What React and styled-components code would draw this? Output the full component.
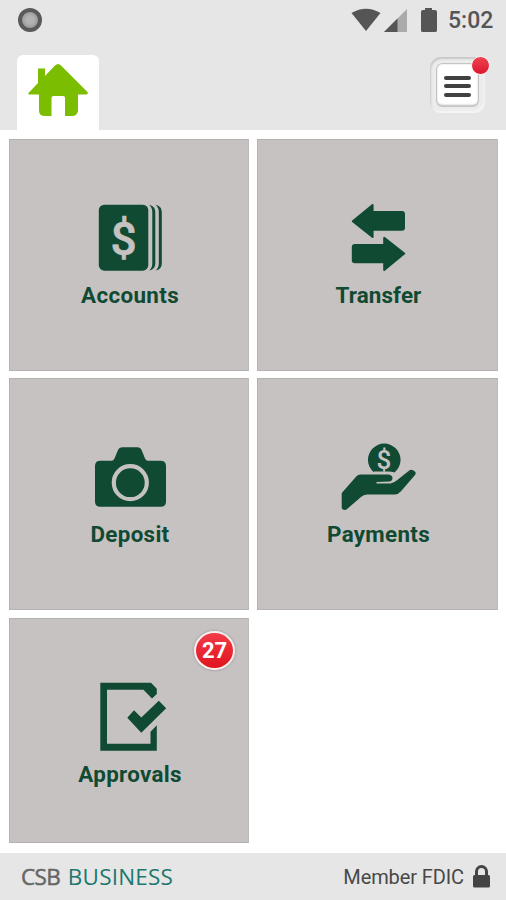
import React from 'react';
import styled, { createGlobalStyle } from 'styled-components';

const GREEN = '#104a33';
const TILE = '#c6c2c1';

const GlobalStyle = createGlobalStyle`
    * {
        box-sizing: border-box;
    }
    body {
        margin: 0;
        background: #fff;
        font-family: Roboto, "Liberation Sans", sans-serif;
    }
`;

const Screen = styled.div`
    display: flex;
    flex-direction: column;
    height: 900px;
    overflow: hidden;
`;

const Header = styled.header`
    height: 130px;
    background: #e6e6e6;
`;

const StatusBar = styled.div`
    display: flex;
    align-items: center;
    height: 40px;
    padding: 0 13px 0 18px;
`;

const Record = styled.div`
    width: 24px;
    height: 24px;
    margin-right: auto;
    border: 4px solid #5a5a5a;
    border-radius: 50%;
    background: radial-gradient(#b4b4b4 30%, #989898 75%);
`;

const StatusIcons = styled.svg`
    display: block;
    width: 90px;
    height: 30px;
`;

const Clock = styled.span`
    width: 45px;
    margin-left: 8px;
    padding-top: 2px;
    color: #555;
    font-size: 23px;
    font-weight: 500;
    line-height: 28px;
    white-space: nowrap;
`;

const Nav = styled.nav`
    display: flex;
    justify-content: space-between;
    height: 90px;
    padding: 15px 21px 0 17px;
`;

const HomeTab = styled.div`
    width: 82px;
    height: 75px;
    border-radius: 6px 6px 0 0;
    background: #fff;

    svg {
        display: block;
    }
`;

const MenuButton = styled.div`
    position: relative;
    display: flex;
    flex-direction: column;
    align-items: center;
    justify-content: center;
    gap: 4.5px;
    width: 55px;
    height: 56px;
    margin-top: 2px;
    padding-top: 2px;
    border: 6px solid #ececec;
    border-radius: 12px;
    background: #fff;
    box-shadow: inset 0 0 0 1px #c4c4c4, inset 0 0 2px 1px #d0d0d0, inset 0 -2px 2px #bbb;

    &::before {
        content: '';
        position: absolute;
        inset: -6px;
        border-radius: 11px;
        box-shadow: inset 1px 2px 2px #c8c8c8, inset -1px -2px 2px #f6f6f6;
    }
`;

const MenuLine = styled.span`
    width: 27px;
    height: 4px;
    border-radius: 2px;
    background: #414141;
`;

const Dot = styled.span`
    position: absolute;
    top: -7px;
    right: -11px;
    width: 19px;
    height: 19px;
    border: 1.5px solid #f7f1f1;
    border-radius: 50%;
    background: linear-gradient(#f04350, #dc1830);
`;

const Grid = styled.main`
    display: grid;
    grid-template-columns: 240px 241px;
    grid-template-rows: 231.5px 231.5px 225.5px;
    gap: 7.8px 8px;
    flex: 1;
    align-content: start;
    padding: 9px 8px 0 9px;
`;

const TileBox = styled.div`
    position: relative;
    display: flex;
    flex-direction: column;
    align-items: center;
    padding-top: 60px;
    border: 1px solid #b4b1af;
    border-right-color: #bebbb9;
    background: ${TILE};
`;

const Glyph = styled.svg`
    display: block;
    width: 80px;
    height: 80px;
    fill: ${GREEN};
`;

const Label = styled.span`
    margin-top: 2px;
    padding-left: 2px;
    color: ${GREEN};
    font-size: 22.4px;
    font-weight: 700;
    line-height: 26px;
    letter-spacing: ${props => props.$spacing}px;
`;

const Badge = styled.span`
    position: absolute;
    top: 12px;
    right: 13px;
    width: 41px;
    height: 39px;
    border: 2px solid #f8eeee;
    border-radius: 50%;
    background: linear-gradient(#f23c48, #e0141e);
    box-shadow: 0 0 2px 1px #aaa;
    color: #fff;
    font-size: 22px;
    font-weight: 700;
    line-height: 36px;
    text-align: center;
`;

const Footer = styled.footer`
    display: flex;
    align-items: center;
    justify-content: space-between;
    height: 47px;
    padding: 0 15px 0 21px;
    background: #e6e6e6;
`;

const Brand = styled.div`
    color: #1d786e;
    font-family: "Open Sans", "Noto Sans", sans-serif;
    font-size: 22.5px;
    line-height: 28px;
    letter-spacing: 0.2px;
    word-spacing: 1.5px;

    b {
        color: #666;
        font-weight: 500;
        letter-spacing: -0.6px;
        -webkit-text-stroke: 0.5px #666;
    }
`;

const Member = styled.div`
    display: flex;
    align-items: center;
    gap: 8px;
    color: #484848;
    font-size: 20px;
    letter-spacing: -0.1px;
`;

const HomeIcon = () => (
    <svg width="82" height="75" viewBox="0 0 82 75" fill="#7bbd00">
        <path d="M11.5 38 21 28V13.5h7v7.5L38 10.5Q41 7.5 44 10.5L70.5 37Q71.5 39.5 69 39.5H61V56Q60 61 55 61H48V42.5Q48 41 46 41H36.5Q34.5 41 34.5 43V61H28Q22 61 22 55.5V39.5H13Q10.5 39.5 11.5 38Z" />
    </svg>
);

const AccountsIcon = () => (
    <Glyph viewBox="0 0 80 80">
        <rect x="9.8" y="4.7" width="49.5" height="66" rx="5.5" />
        <path d="M60 4.8Q66.3 6 66.3 12V63.5Q66.3 69.500 60 70.500Q63.300 68 63.300 63.500V12Q63.300 7.500 60 4.800Z" />
        <path d="M66.500 4.800Q72.800 6 72.800 12V63.500Q72.800 69.500 66.500 70.500Q69.800 68 69.800 63.500V12Q69.800 7.500 66.500 4.800Z" />
        <text x="34.5" y="54.5" fill={TILE} stroke={TILE} strokeWidth="0.6" fontFamily="Roboto" fontSize="46" fontWeight="500" textAnchor="middle">$</text>
    </Glyph>
);

const TransferIcon = () => (
    <Glyph viewBox="0 0 80 80" stroke={GREEN} strokeWidth="2" strokeLinejoin="round">
        <path d="M14.8 21.3 34.6 5V12H64Q66 12 66 14V27.7Q66 29.7 64 29.7H34.6V37Z" />
        <path d="M66.2 53.6 46.2 37.8V45H17Q14.8 45 14.8 47V60.5Q14.8 62.3 17 62.3H46.2V70Z" />
    </Glyph>
);

const DepositIcon = () => (
    <Glyph viewBox="0 0 80 80">
        <path d="M11.5 21.7H22.5Q24.5 21.7 25.5 19.5L28.8 11.5Q30.2 8.2 33.5 8.2H48.3Q51.5 8.2 52.8 11.5L56 19.5Q57 21.7 59 21.7H71.5Q77 21.7 77 27V62.5Q77 67.8 71.5 67.8H11.5Q6 67.8 6 62.5V27Q6 21.7 11.5 21.7Z" />
        <circle cx="41.3" cy="43.7" r="16.5" fill="none" stroke={TILE} strokeWidth="4.2" />
    </Glyph>
);

const PaymentsIcon = () => (
    <Glyph viewBox="0 0 80 80">
        <path d="M36 33.5A16.3 16.3 0 1 1 56.5 33.5Q54 32.5 50 32.5H36Z" />
        <text x="45.8" y="29.5" fill={TILE} fontFamily="Roboto" fontSize="26" fontWeight="500" textAnchor="middle">$</text>
        <path d="M3.7 55Q3.7 54 4.4 53.2L18.5 37.3Q20 35.5 22.5 35.5H50.5Q54.5 36 54.5 39Q54.5 42.3 51 42.6L38.5 43V44.5H52.5Q56 44 59 41.3L71.5 31.3Q73.5 30.2 75.5 31.4Q79 33 77 36L63 52.3Q60.5 55.3 57 55.5H29Q25.5 55.5 23 58L8.5 70.5Q6 71.5 4.3 70Q3.7 69.3 3.7 68Z" />
    </Glyph>
);

const ApprovalsIcon = () => (
    <Glyph viewBox="0 0 80 80">
        <path d="M11.3 3.7H62L67.800 9.800V15L63 19.500 54.500 10.700H18V64.800H61.500V52.800L67.800 46.200V71.700H11.300Z" />
        <path d="M38.3 38.7 45 31.2 52.3 38.5 69.8 21.800 77.200 29.300 52.300 53.700Z" />
    </Glyph>
);

const tiles = [
    { label: 'Accounts', icon: AccountsIcon, spacing: 0.35 },
    { label: 'Transfer', icon: TransferIcon, spacing: 0.1 },
    { label: 'Deposit', icon: DepositIcon, spacing: 0.3 },
    { label: 'Payments', icon: PaymentsIcon, spacing: 0.3 },
    { label: 'Approvals', icon: ApprovalsIcon, spacing: 0.3, badge: 27 }
];

const App = () => (
    <Screen>
        <GlobalStyle />
        <Header>
            <StatusBar>
                <Record />
                <StatusIcons viewBox="0 0 90 30" fill="#555">
                    <path d="M1.5 8Q16 -.5 30.5 8L16 26Z" />
                    <path d="M57 4V27H34Z" fill="#aaa" />
                    <path d="M47.5 13.5V27H34Z" />
                    <path d="M75 3h7v2h3q2 0 2 2V25.5q0 1.5-2 1.5H72.5q-1.5 0-1.5-1.5V7q0-2 2-2h2Z" />
                </StatusIcons>
                <Clock>5:02</Clock>
            </StatusBar>
            <Nav>
                <HomeTab><HomeIcon /></HomeTab>
                <MenuButton>
                    <MenuLine />
                    <MenuLine />
                    <MenuLine />
                    <Dot />
                </MenuButton>
            </Nav>
        </Header>
        <Grid>
            {tiles.map(({ label, icon: Icon, spacing, badge }) => (
                <TileBox key={label}>
                    <Icon />
                    <Label $spacing={spacing}>{label}</Label>
                    {badge && <Badge>{badge}</Badge>}
                </TileBox>
            ))}
        </Grid>
        <Footer>
            <Brand><b>CSB</b> BUSINESS</Brand>
            <Member>
                Member FDIC
                <svg width="19" height="24" viewBox="0 0 19 24">
                    <path d="M4.5 11V6.5a5 5 0 0 1 10 0V11" fill="none" stroke="#444" strokeWidth="3" />
                    <rect x="1" y="10" width="17" height="12.5" rx="1.5" fill="#444" />
                </svg>
            </Member>
        </Footer>
    </Screen>
);

export default App;
